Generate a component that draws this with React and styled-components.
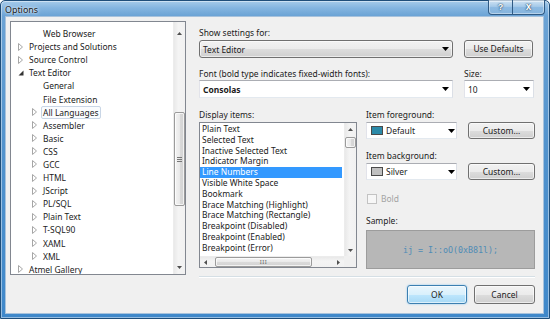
import React from "react";
import styled, { createGlobalStyle } from "styled-components";

const GlobalStyle = createGlobalStyle`
  html, body {
    margin: 0;
    padding: 0;
    background: #ffffff;
  }
  body {
    font-family: "Noto Sans", "Liberation Sans", sans-serif;
    font-size: 8.45px;
    color: #1b1b1b;
  }
  * {
    box-sizing: border-box;
  }
`;

const treeItems = [
  { label: "Web Browser", level: 1 },
  { label: "Projects and Solutions", level: 0, arrow: "closed" },
  { label: "Source Control", level: 0, arrow: "closed" },
  { label: "Text Editor", level: 0, arrow: "open" },
  { label: "General", level: 1 },
  { label: "File Extension", level: 1 },
  { label: "All Languages", level: 1, arrow: "closed", focus: true },
  { label: "Assembler", level: 1, arrow: "closed" },
  { label: "Basic", level: 1, arrow: "closed" },
  { label: "CSS", level: 1, arrow: "closed" },
  { label: "GCC", level: 1, arrow: "closed" },
  { label: "HTML", level: 1, arrow: "closed" },
  { label: "JScript", level: 1, arrow: "closed" },
  { label: "PL/SQL", level: 1, arrow: "closed" },
  { label: "Plain Text", level: 1, arrow: "closed" },
  { label: "T-SQL90", level: 1, arrow: "closed" },
  { label: "XAML", level: 1, arrow: "closed" },
  { label: "XML", level: 1, arrow: "closed" },
  { label: "Atmel Gallery", level: 0, arrow: "closed" },
];

const displayItems = [
  "Plain Text",
  "Selected Text",
  "Inactive Selected Text",
  "Indicator Margin",
  "Line Numbers",
  "Visible White Space",
  "Bookmark",
  "Brace Matching (Highlight)",
  "Brace Matching (Rectangle)",
  "Breakpoint (Disabled)",
  "Breakpoint (Enabled)",
  "Breakpoint (Error)",
];

// small triangles used by scroll bars and combo boxes
const Tri = ({ dir = "down", w = 7, h = 4, color = "#000" }) => {
  const paths = {
    down: `M0 0 H${w} L${w / 2} ${h} Z`,
    up: `M0 ${h} H${w} L${w / 2} 0 Z`,
    left: `M${w} 0 V${h} L0 ${h / 2} Z`,
    right: `M0 0 V${h} L${w} ${h / 2} Z`,
  };
  return (
    <svg width={w} height={h} viewBox={`0 0 ${w} ${h}`}>
      <path d={paths[dir]} fill={color} />
    </svg>
  );
};

const TreeArrow = ({ type }) =>
  type === "open" ? (
    <svg width="6" height="6" viewBox="0 0 6 6">
      <path d="M5.5 0.5 V5.5 H0.5 Z" fill="#333" />
    </svg>
  ) : (
    <svg width="5" height="8" viewBox="0 0 5 8">
      <path d="M0.5 0.5 L4.5 4 L0.5 7.5 Z" fill="#fff" stroke="#a6a6a6" strokeWidth="1" />
    </svg>
  );

const VScrollBar = ({ upH, gap, thumb, downH }) => (
  <VScroll>
    <ScrollArrow $size={upH}>
      <Tri dir="up" w={5} h={3} color="#505050" />
    </ScrollArrow>
    <Spacer $size={gap} />
    <Thumb $size={thumb}>{thumb > 30 ? <Grip /> : null}</Thumb>
    <Spacer $grow />
    <ScrollArrow $size={downH}>
      <Tri dir="down" w={5} h={3} color="#505050" />
    </ScrollArrow>
  </VScroll>
);

const App = () => {
  return (
    <>
      <GlobalStyle />
      <Frame>
        <TitleBar>
          <Title>Options</Title>
          <CaptionGroup>
            <CaptionButton $w={23}>?</CaptionButton>
            <CaptionButton $w={32} $close>x</CaptionButton>
          </CaptionGroup>
        </TitleBar>
        <Client>
          <Tree>
            <TreeList>
              {treeItems.map((item) => (
                <TreeRow key={item.label} $level={item.level}>
                  <ArrowCell>{item.arrow ? <TreeArrow type={item.arrow} /> : null}</ArrowCell>
                  <TreeLabel $focus={item.focus}>{item.label}</TreeLabel>
                </TreeRow>
              ))}
            </TreeList>
            <VScrollBar upH={22} gap={68} thumb={94} downH={14} />
          </Tree>

          <Main>
            <Label>Show settings for:</Label>
            <Row $mt={1}>
              <Combo $w={254} $h={18} $button>
                <ComboText>Text Editor</ComboText>
                <ComboArrow>
                  <Tri />
                </ComboArrow>
              </Combo>
              <Button $w={69} $h={18}>Use Defaults</Button>
            </Row>

            <Row $mt={9}>
              <Field $w={254}>
                <Label>Font (bold type indicates fixed-width fonts):</Label>
                <Combo $w={254} $h={18}>
                  <ComboText $bold>Consolas</ComboText>
                  <ComboArrow>
                    <Tri />
                  </ComboArrow>
                </Combo>
              </Field>
              <Field $w={70}>
                <Label>Size:</Label>
                <Combo $w={70} $h={18}>
                  <ComboText>10</ComboText>
                  <ComboArrow>
                    <Tri />
                  </ComboArrow>
                </Combo>
              </Field>
            </Row>

            <Lower>
              <Field $w={158}>
                <Label>Display items:</Label>
                <ListBox>
                  <ListItems>
                    {displayItems.map((t) => (
                      <ListItem key={t} $selected={t === "Line Numbers"}>
                        {t}
                      </ListItem>
                    ))}
                  </ListItems>
                  <VScrollBar upH={13} gap={1} thumb={11} downH={11} />
                  <HScroll>
                    <ScrollArrow $size={11} $horizontal>
                      <Tri dir="left" w={3} h={5} color="#505050" />
                    </ScrollArrow>
                    <Spacer $size={4} $horizontal />
                    <Thumb $size={97} $horizontal>
                      <HGrip>III</HGrip>
                    </Thumb>
                    <Spacer $grow />
                    <ScrollArrow $size={11} $horizontal>
                      <Tri dir="right" w={3} h={5} color="#505050" />
                    </ScrollArrow>
                  </HScroll>
                  <Corner />
                </ListBox>
              </Field>

              <Side>
                <Label>Item foreground:</Label>
                <Row $mt={1}>
                  <Combo $w={91} $h={17}>
                    <Swatch $color="#2b8aa9" />
                    <ComboText>Default</ComboText>
                    <ComboArrow $w={10}>
                      <Tri />
                    </ComboArrow>
                  </Combo>
                  <Button $w={67} $h={17}>Custom...</Button>
                </Row>

                <Label $mt={10}>Item background:</Label>
                <Row $mt={1}>
                  <Combo $w={91} $h={17}>
                    <Swatch $color="#c0c0c0" />
                    <ComboText>Silver</ComboText>
                    <ComboArrow $w={10}>
                      <Tri />
                    </ComboArrow>
                  </Combo>
                  <Button $w={67} $h={17}>Custom...</Button>
                </Row>

                <CheckRow>
                  <CheckBox />
                  <span>Bold</span>
                </CheckRow>

                <Label $mt={9}>Sample:</Label>
                <Sample>ij = I::oO(0xB81l);</Sample>
              </Side>
            </Lower>

            <Separator />
            <Footer>
              <Button $w={60} $h={19} $primary>OK</Button>
              <Button $w={61} $h={19}>Cancel</Button>
            </Footer>
          </Main>
        </Client>
      </Frame>
    </>
  );
};

export default App;

const Frame = styled.div`
  width: 550px;
  height: 319px;
  display: flex;
  flex-direction: column;
  padding: 0 5px 5px 4px;
  border: 1px solid #1f4e7a;
  border-radius: 5px 5px 0 0;
  background: linear-gradient(
    180deg,
    #a6cbea 0px,
    #84b5e0 7px,
    #6ba3d5 15px,
    #5293cd 45%,
    #3f88ca 100%
  );
  box-shadow: inset 0 0 0 1px rgba(255, 255, 255, 0.45);
`;

const TitleBar = styled.div`
  height: 15px;
  display: flex;
  align-items: flex-start;
`;

const Title = styled.div`
  padding-top: 3px;
  line-height: 12px;
  font-size: 8.9px;
  color: #1a1a1a;
  text-shadow: 0 0 4px rgba(255, 255, 255, 0.9), 0 0 2px rgba(255, 255, 255, 0.9);
`;

const CaptionGroup = styled.div`
  display: flex;
  margin-left: auto;
  margin-top: -1px;
  margin-right: -1px;
  height: 15px;
  border: 1px solid #2f5a84;
  border-top: none;
  border-radius: 0 0 4px 4px;
  overflow: hidden;
  box-shadow: inset 0 0 0 1px rgba(255, 255, 255, 0.4);
`;

const CaptionButton = styled.div`
  width: ${(p) => p.$w}px;
  display: flex;
  align-items: center;
  justify-content: center;
  padding-bottom: 1px;
  font-family: "Liberation Sans", sans-serif;
  font-weight: bold;
  font-size: ${(p) => (p.$close ? 10 : 9)}px;
  color: #ffffff;
  text-shadow: 0 0 1px #20405f, 0 0 2px #20405f;
  border-left: ${(p) => (p.$close ? "1px solid #2f5a84" : "none")};
  background: linear-gradient(
    180deg,
    rgba(255, 255, 255, 0.45) 0%,
    rgba(255, 255, 255, 0.2) 50%,
    rgba(255, 255, 255, 0.05) 51%,
    rgba(255, 255, 255, 0.15) 100%
  );
`;

const Client = styled.div`
  flex: 1;
  display: flex;
  align-items: flex-start;
  background: #f0f0f0;
  border: 1px solid #a7c2dc;
  padding: 4px 8px 9px 4px;
`;

const Tree = styled.div`
  width: 176px;
  height: 254px;
  flex-shrink: 0;
  display: flex;
  background: #ffffff;
  border: 1px solid #828790;
`;

const TreeList = styled.div`
  flex: 1;
  padding-top: 5px;
  overflow: hidden;
`;

const TreeRow = styled.div`
  height: 13.1px;
  display: flex;
  align-items: center;
  padding-left: ${(p) => 4 + p.$level * 14}px;
  white-space: nowrap;
`;

const ArrowCell = styled.div`
  width: 11px;
  display: flex;
  align-items: center;
  justify-content: center;
`;

const TreeLabel = styled.span`
  margin-left: 1px;
  padding: 0 2px 0 1px;
  line-height: 11px;
  border: 1px solid ${(p) => (p.$focus ? "#c9d6e6" : "transparent")};
  border-radius: 2px;
  background: ${(p) => (p.$focus ? "#fafcfe" : "transparent")};
`;

const VScroll = styled.div`
  width: 12px;
  flex-shrink: 0;
  display: flex;
  flex-direction: column;
  background: linear-gradient(90deg, #e9e9e9 0%, #f4f4f4 40%, #f1f1f1 100%);
  border-left: 1px solid #ececec;
`;

const HScroll = styled.div`
  display: flex;
  background: linear-gradient(180deg, #e9e9e9 0%, #f4f4f4 40%, #f1f1f1 100%);
  border-top: 1px solid #ececec;
`;

const ScrollArrow = styled.div`
  ${(p) => (p.$horizontal ? "width" : "height")}: ${(p) => p.$size}px;
  flex-shrink: 0;
  display: flex;
  align-items: center;
  justify-content: center;
`;

const Spacer = styled.div`
  ${(p) => (p.$grow ? "flex: 1;" : `flex: 0 0 ${p.$size}px;`)}
`;

const Thumb = styled.div`
  flex: 0 0 ${(p) => p.$size}px;
  display: flex;
  align-items: center;
  justify-content: center;
  border: 1px solid #9b9b9b;
  border-radius: 2px;
  background: ${(p) =>
    p.$horizontal
      ? "linear-gradient(180deg, #f4f4f4 0%, #e9e9e9 50%, #dadada 51%, #d3d3d3 100%)"
      : "linear-gradient(90deg, #f4f4f4 0%, #e9e9e9 50%, #dadada 51%, #d3d3d3 100%)"};
  box-shadow: inset 0 0 0 1px rgba(255, 255, 255, 0.7);
`;

const Grip = styled.div`
  width: 5px;
  height: 5px;
  border-top: 1px solid #777;
  border-bottom: 1px solid #777;
  background: linear-gradient(180deg, transparent 1px, #777 1px, #777 2px, transparent 2px);
`;

const HGrip = styled.span`
  font-size: 6px;
  line-height: 6px;
  letter-spacing: 0.5px;
  color: #6a6a6a;
`;

const Corner = styled.div`
  background: #f0f0f0;
`;

const Main = styled.div`
  flex: 1;
  margin-left: 13px;
  padding-top: 5px;
  display: flex;
  flex-direction: column;
`;

const Label = styled.div`
  height: 13px;
  line-height: 13px;
  margin-top: ${(p) => p.$mt || 0}px;
  white-space: nowrap;
`;

const Row = styled.div`
  display: flex;
  gap: ${(p) => (p.$gap ? p.$gap : 11)}px;
  margin-top: ${(p) => p.$mt || 0}px;
`;

const Field = styled.div`
  width: ${(p) => p.$w}px;
  flex-shrink: 0;
  display: flex;
  flex-direction: column;
`;

const Combo = styled.div`
  width: ${(p) => p.$w}px;
  height: ${(p) => p.$h}px;
  flex-shrink: 0;
  display: flex;
  align-items: center;
  padding-left: 3px;
  border: 1px solid;
  border-color: ${(p) => (p.$button ? "#707070" : "#abadb3 #dbdfe6 #e3e9ef #e2e3ea")};
  border-radius: ${(p) => (p.$button ? 3 : 0)}px;
  background: ${(p) =>
    p.$button
      ? "linear-gradient(180deg, #f2f2f2 0%, #ebebeb 50%, #dddddd 51%, #cfcfcf 100%)"
      : "#ffffff"};
  box-shadow: ${(p) => (p.$button ? "inset 0 0 0 1px rgba(255,255,255,0.6)" : "none")};
`;

const ComboText = styled.span`
  flex: 1;
  font-weight: ${(p) => (p.$bold ? 700 : 400)};
  white-space: nowrap;
`;

const ComboArrow = styled.div`
  width: ${(p) => p.$w || 13}px;
  display: flex;
  align-items: center;
  justify-content: center;
`;

const Swatch = styled.div`
  width: 12px;
  height: 9px;
  margin: 0 3px 0 1px;
  background: ${(p) => p.$color};
  border: 1px solid #4a4a4a;
`;

const Button = styled.div`
  width: ${(p) => p.$w}px;
  height: ${(p) => p.$h}px;
  flex-shrink: 0;
  display: flex;
  align-items: center;
  justify-content: center;
  padding-bottom: 1px;
  border: 1px solid ${(p) => (p.$primary ? "#3c7fb1" : "#707070")};
  border-radius: 3px;
  background: ${(p) =>
    p.$primary
      ? "linear-gradient(180deg, #eaf6fd 0%, #d9f0fc 50%, #bee6fd 51%, #a7d9f5 100%)"
      : "linear-gradient(180deg, #f2f2f2 0%, #ebebeb 50%, #dddddd 51%, #cfcfcf 100%)"};
  box-shadow: ${(p) =>
    p.$primary
      ? "inset 0 0 0 1px rgba(255,255,255,0.6), 0 0 2px #7ec3f0"
      : "inset 0 0 0 1px rgba(255,255,255,0.6)"};
  white-space: nowrap;
`;

const Lower = styled.div`
  display: flex;
  gap: 9px;
  margin-top: 10px;
`;

const ListBox = styled.div`
  height: 146px;
  margin-top: 1px;
  display: grid;
  grid-template-columns: 1fr 12px;
  grid-template-rows: 1fr 11px;
  background: #ffffff;
  border: 1px solid #828790;
`;

const ListItems = styled.div`
  padding-top: 1px;
  overflow: hidden;
`;

const ListItem = styled.div`
  height: 10.8px;
  line-height: 10.8px;
  padding-left: 2px;
  margin-right: 2px;
  white-space: nowrap;
  background: ${(p) => (p.$selected ? "#3399ff" : "transparent")};
  color: ${(p) => (p.$selected ? "#ffffff" : "#1b1b1b")};
`;

const Side = styled.div`
  flex: 1;
  display: flex;
  flex-direction: column;
`;

const CheckRow = styled.div`
  height: 13px;
  margin-top: 12px;
  display: flex;
  align-items: center;
  gap: 4px;
  padding-left: 1px;
  color: #a3a3a3;
`;

const CheckBox = styled.div`
  width: 10px;
  height: 10px;
  border: 1px solid #c3c3c3;
  background: #f7f7f7;
`;

const Sample = styled.div`
  height: 39px;
  margin-top: 3px;
  display: flex;
  align-items: center;
  justify-content: center;
  background: #b7b7b7;
  border: 1px solid #9c9c9c;
  font-family: "DejaVu Sans Mono", "Liberation Mono", monospace;
  font-size: 8.3px;
  color: #4f8cb6;
  white-space: pre;
`;

const Separator = styled.div`
  margin-top: 7px;
  border-top: 1px solid #d5dfe5;
  border-bottom: 1px solid #ffffff;
`;

const Footer = styled.div`
  display: flex;
  justify-content: flex-end;
  gap: 7px;
  margin-top: 7px;
`;
